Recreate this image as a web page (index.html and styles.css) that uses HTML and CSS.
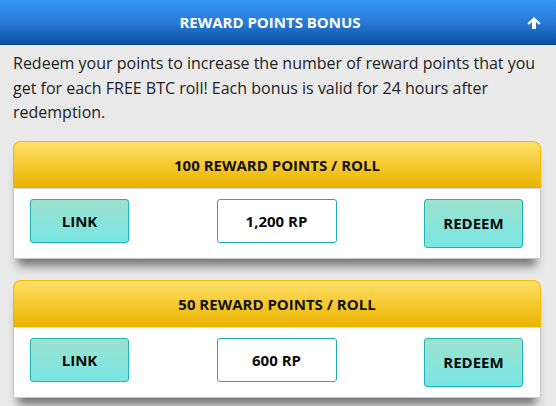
FILE: index.html
```html
<!DOCTYPE html>
<html>
<head>
<meta charset="utf-8">
<link rel="stylesheet" href="styles.css">
</head>
<body>
<div class="topbar">
  <span class="topbar-title">REWARD POINTS BONUS</span>
  <svg class="topbar-arrow" width="14" height="12" viewBox="0 0 14 12"><path d="M7 0 L13.6 6.2 L12 7.8 L9 5 L9 12 L5 12 L5 5 L2 7.8 L0.4 6.2 Z" fill="#fff"/></svg>
</div>
<div class="content">
  <p class="intro">Redeem your points to increase the number of reward points that you get for each FREE BTC roll! Each bonus is valid for 24 hours after redemption.</p>
  <div class="card">
    <div class="card-head">100 REWARD POINTS / ROLL</div>
    <div class="card-body">
      <div class="btn">LINK</div>
      <div class="value">1,200 RP</div>
      <div class="btn btn-tall">REDEEM</div>
    </div>
  </div>
  <div class="card">
    <div class="card-head">50 REWARD POINTS / ROLL</div>
    <div class="card-body">
      <div class="btn">LINK</div>
      <div class="value">600 RP</div>
      <div class="btn btn-tall">REDEEM</div>
    </div>
  </div>
</div>
</body>
</html>
```
FILE: styles.css
```css
html, body {
  margin: 0;
  padding: 0;
}
body {
  background: #e9e9e9;
  font-family: "Open Sans", "DejaVu Sans", sans-serif;
  color: #1a1a1a;
  width: 556px;
  height: 406px;
  overflow: hidden;
}
.topbar {
  height: 44px;
  background: linear-gradient(#3597f7, #2a7ad8 50%, #0a52a0);
  border-bottom: 1px solid #07468c;
  display: flex;
  align-items: center;
  justify-content: center;
  position: relative;
  padding-right: 16px;
}
.topbar-title {
  color: #fff;
  font-weight: bold;
  font-size: 15px;
}
.topbar-arrow {
  position: absolute;
  right: 15px;
  top: 17px;
}
.content {
  padding: 0 15px 0 13px;
}
.intro {
  margin: 6px 0 16px 0;
  font-size: 16px;
  line-height: 24.5px;
  color: #222;
}
.card {
  margin-bottom: 21px;
  box-shadow: 0 12px 10px -5px rgba(0, 0, 0, 0.5);
  border-radius: 8px 8px 2px 2px;
}
.card-head {
  height: 46px;
  border: 1px solid #f3b800;
  border-bottom: none;
  border-radius: 8px 8px 0 0;
  background: linear-gradient(#ffe06a, #f4c62a 55%, #e8b300);
  display: flex;
  align-items: center;
  justify-content: center;
  font-weight: bold;
  font-size: 15px;
  color: #111;
}
.card-body {
  background: #fff;
  border: 1px solid #c8c8c8;
  border-top: 1px solid #d8d8d8;
  border-radius: 0 0 2px 2px;
  height: 59px;
  padding: 10px 17px 0 16px;
  display: flex;
  justify-content: space-between;
  align-items: flex-start;
}
.btn, .value {
  height: 42px;
  border-radius: 3px;
  display: flex;
  align-items: center;
  justify-content: center;
  font-weight: bold;
  font-size: 15px;
  color: #0a0a0a;
}
.btn {
  width: 97px;
  border: 1px solid #1fb2b6;
  background: linear-gradient(#9de2cf, #78e6e3);
}
.btn-tall {
  height: 47px;
}
.value {
  width: 118px;
  border: 1px solid #1ea9b5;
  background: #fff;
}
```
